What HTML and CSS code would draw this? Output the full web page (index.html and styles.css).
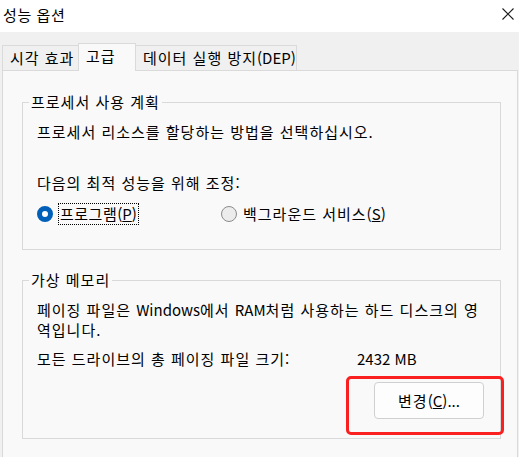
FILE: index.html
```html
<!DOCTYPE html>
<html lang="ko">
<head>
    <meta charset="UTF-8">
    <meta name="viewport" content="width=device-width, initial-scale=1.0">
    <title>성능 옵션</title>
    <link rel="stylesheet" href="styles.css">
</head>
<body>

<div class="titlebar">
    <span class="title">성능 옵션</span>
    <svg class="close" width="12" height="12" viewBox="0 0 12 12">
        <path d="M0.5 0.5 L11.5 11.5 M11.5 0.5 L0.5 11.5" stroke="#1a1a1a" stroke-width="1.1" fill="none"/>
    </svg>
</div>

<div class="tabs">
    <div class="tab tab-visual">시각 효과</div>
    <div class="tab tab-advanced active">고급</div>
    <div class="tab tab-dep">데이터 실행 방지<span class="latin">(DEP)</span></div>
</div>

<div class="panel">
    <fieldset class="group group-cpu">
        <legend>프로세서 사용 계획</legend>
        <p class="line">프로세서 리소스를 할당하는 방법을 선택하십시오.</p>
        <p class="line line-adjust">다음의 최적 성능을 위해 조정:</p>
        <div class="radios">
            <div class="option option-first">
                <span class="radio checked"></span>
                <span class="label focused">프로그램<span class="latin">(<u>P</u>)</span></span>
            </div>
            <div class="option">
                <span class="radio"></span>
                <span class="label">백그라운드 서비스<span class="latin">(<u>S</u>)</span></span>
            </div>
        </div>
    </fieldset>

    <fieldset class="group group-mem">
        <legend>가상 메모리</legend>
        <p class="line nowrap">페이징 파일은 <span class="latin">Windows</span>에서 <span class="latin">RAM</span>처럼 사용하는 하드 디스크의 영<br>역입니다.</p>
        <div class="line total">
            <span class="total-label">모든 드라이브의 총 페이징 파일 크기:</span>
            <span class="total-value latin">2432 MB</span>
        </div>
        <div class="button-row">
            <div class="marked">
                <div class="button">변경<span class="latin">(<u>C</u>)...</span></div>
                <span class="mark"></span>
            </div>
        </div>
    </fieldset>
</div>

</body>
</html>
```

FILE: styles.css
```css
body {
    margin: 0;
    background-color: #f0f0f0;
    font-family: "Noto Sans CJK KR", "Noto Sans", sans-serif;
    font-size: 15px;
    letter-spacing: 1px;
    color: #000;
    height: 457px;
    overflow: hidden;
}
.latin {
    letter-spacing: 0;
}
.nowrap {
    white-space: nowrap;
}
.titlebar {
    height: 32px;
    background-color: #fff;
    display: flex;
    justify-content: space-between;
    align-items: center;
    padding: 0 5px 0 3px;
}
.title {
    line-height: 20px;
    margin-top: -2px;
    letter-spacing: 0.6px;
}
.close {
    margin-top: -4px;
}
.tabs {
    display: flex;
    align-items: flex-end;
    height: 27px;
    margin-top: 11px;
    padding-left: 2px;
}
.tab {
    height: 25px;
    box-sizing: border-box;
    border: 1px solid #dadada;
    border-bottom: none;
    line-height: 23px;
    padding-left: 7px;
    background-color: #f0f0f0;
}
.tab-visual {
    width: 76px;
    border-right: none;
}
.tab-advanced {
    width: 58px;
    height: 28px;
    margin-bottom: -1px;
    background-color: #f9f9f9;
    position: relative;
}
.tab-dep {
    width: 161px;
    border-left: none;
}
.panel {
    margin: 0 1px 0 2px;
    height: 400px;
    box-sizing: border-box;
    border: 1px solid #dadada;
    background-color: #f9f9f9;
    padding-top: 21px;
}
.group {
    margin: 0 16px 0 19px;
    border: 1px solid #d9d9d9;
    padding: 10px 12px 0 14px;
    min-width: 0;
}
.group legend {
    padding: 0 2px;
    margin-left: -8px;
    line-height: 20px;
}
.line {
    margin: 0;
    line-height: 20px;
}
.group-cpu {
    padding-bottom: 24px;
}
.line-adjust {
    margin-top: 31px;
}
.radios {
    display: flex;
    align-items: center;
    height: 22px;
    margin-top: 10px;
}
.option {
    display: flex;
    align-items: center;
}
.option-first {
    width: 184px;
}
.radio {
    width: 16px;
    height: 16px;
    box-sizing: border-box;
    border-radius: 50%;
    border: 1px solid #8b8b8b;
    background-color: #ececec;
    margin-right: 4px;
}
.radio.checked {
    border: 5px solid #005fb8;
    background-color: #fff;
}
.label {
    line-height: 20px;
    padding: 0 1px;
    border: 1px dotted transparent;
}
.label.focused {
    border-color: #000;
    margin-left: 1px;
    letter-spacing: 0.5px;
}
.group-mem {
    margin-top: 20px;
    padding-bottom: 1px;
}
.total {
    display: flex;
    margin-top: 9px;
}
.total-label {
    width: 320px;
}
.button-row {
    display: flex;
    justify-content: flex-end;
    margin-top: 7px;
    padding-bottom: 2px;
}
.marked {
    position: relative;
    padding: 6px 4px 16px 0;
}
.button {
    width: 110px;
    height: 37px;
    box-sizing: border-box;
    border: 1px solid #d0d0d0;
    border-radius: 4px;
    background-color: #fdfdfd;
    display: flex;
    justify-content: center;
    align-items: center;
}
.mark {
    position: absolute;
    top: 0;
    left: -28px;
    right: -16px;
    bottom: 0;
    border: 3px solid #fb2020;
    border-radius: 5px;
}
```
